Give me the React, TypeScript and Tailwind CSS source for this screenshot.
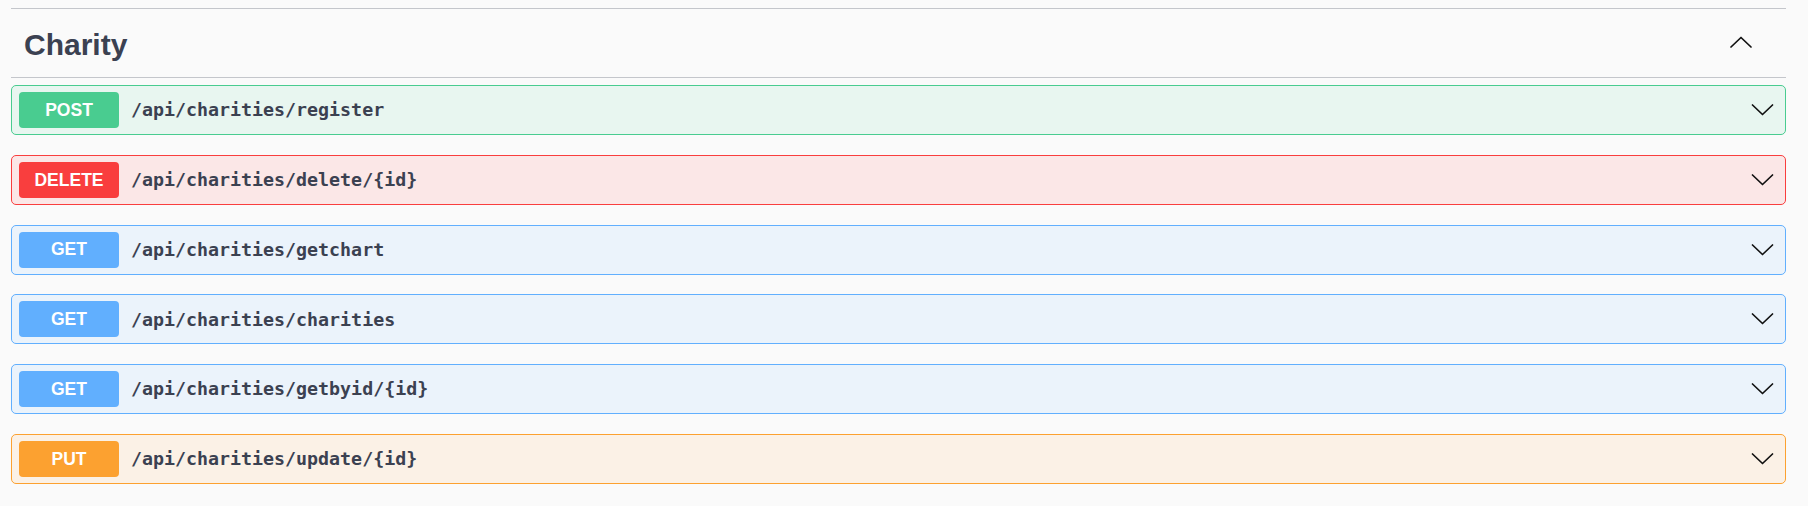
import React from 'react'

type Op = {
  method: string
  path: string
  color: string
  bg: string
}

const ops: Op[] = [
  { method: 'POST', path: '/api/charities/register', color: 'bg-[#49cc90]', bg: 'bg-[#e8f6f0] border-[#49cc90]' },
  { method: 'DELETE', path: '/api/charities/delete/{id}', color: 'bg-[#f93e3e]', bg: 'bg-[#fbe7e7] border-[#f93e3e]' },
  { method: 'GET', path: '/api/charities/getchart', color: 'bg-[#61affe]', bg: 'bg-[#ebf3fb] border-[#61affe]' },
  { method: 'GET', path: '/api/charities/charities', color: 'bg-[#61affe]', bg: 'bg-[#ebf3fb] border-[#61affe]' },
  { method: 'GET', path: '/api/charities/getbyid/{id}', color: 'bg-[#61affe]', bg: 'bg-[#ebf3fb] border-[#61affe]' },
  { method: 'PUT', path: '/api/charities/update/{id}', color: 'bg-[#fca130]', bg: 'bg-[#fbf1e6] border-[#fca130]' },
]

const Chevron = ({ up = false, w, h }: { up?: boolean; w: number; h: number }) => (
  <svg width={w} height={h} viewBox="0 0 22 12" fill="none">
    <path
      d={up ? 'M1 11 L11 1.5 L21 11' : 'M1 1 L11 10.5 L21 1'}
      stroke="#111"
      strokeWidth="1.7"
      strokeLinecap="round"
      strokeLinejoin="round"
    />
  </svg>
)

const App = () => {
  return (
    <div className="w-[1808px] h-[506px] bg-[#fafafa] pt-[8px] font-['Liberation_Sans',Arial,sans-serif]">
      <div className="ml-[11px] w-[1775px]">
        {/* Tag header */}
        <div className="h-[70px] border-y border-[#c4c6cb] flex items-center justify-between pl-[13px] pr-[34px]">
          <h3 className="text-[30px] font-bold text-[#3b4151] leading-none mt-[4px]">Charity</h3>
          <div className="mt-[-2px]">
            <Chevron up w={22} h={12} />
          </div>
        </div>

        {/* Operations */}
        <div className="mt-[7px] flex flex-col gap-[19.8px]">
          {ops.map((op, i) => (
            <div
              key={i}
              className={`h-[50px] border rounded-[5px] flex items-center pl-[7px] pr-[7px] ${op.bg}`}
            >
              <div
                className={`w-[100px] h-[36px] rounded-[4px] flex items-center justify-center text-white text-[17.5px] font-bold ${op.color}`}
              >
                {op.method}
              </div>
              <span className="ml-[12px] text-[18.3px] font-bold text-[#3b4151] font-['DejaVu_Sans_Mono',monospace]">
                {op.path}
              </span>
              <div className="ml-auto mr-[4px]">
                <Chevron w={23} h={12} />
              </div>
            </div>
          ))}
        </div>
      </div>
    </div>
  )
}

export default App
